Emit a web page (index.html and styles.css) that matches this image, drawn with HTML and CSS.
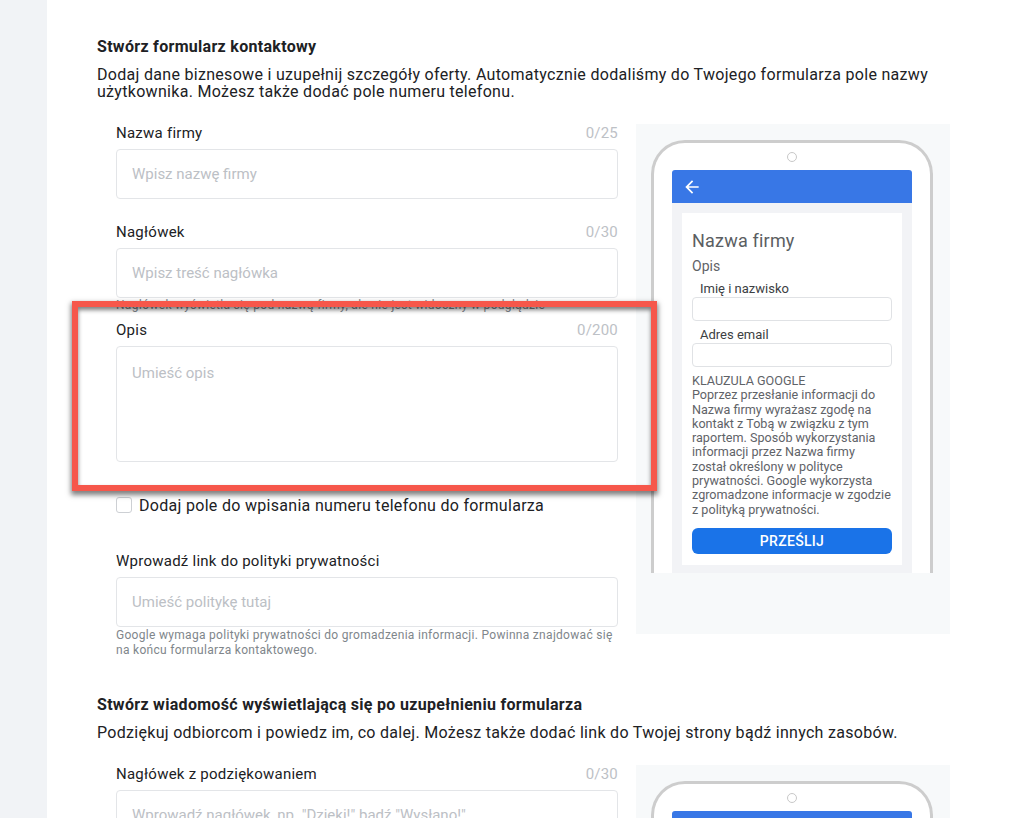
FILE: index.html
```html
<!DOCTYPE html>
<html lang="pl">
<head>
<meta charset="utf-8">
<title>Formularz kontaktowy</title>
<link rel="stylesheet" href="styles.css">
</head>
<body>
<div class="app">
  <aside class="sidebar"></aside>
  <main class="main">
    <section class="section">
      <h2 class="section-title">Stwórz formularz kontaktowy</h2>
      <p class="section-desc">Dodaj dane biznesowe i uzupełnij szczegóły oferty. Automatycznie dodaliśmy do Twojego formularza pole nazwy użytkownika. Możesz także dodać pole numeru telefonu.</p>
      <div class="row">
        <div class="fields">
          <div class="field">
            <div class="field-head"><span class="field-label">Nazwa firmy</span><span class="counter">0/25</span></div>
            <input class="input" type="text" placeholder="Wpisz nazwę firmy">
          </div>
          <div class="field field-helped">
            <div class="field-head"><span class="field-label">Nagłówek</span><span class="counter">0/30</span></div>
            <input class="input" type="text" placeholder="Wpisz treść nagłówka">
            <p class="helper">Nagłówek wyświetla się pod nazwą firmy, ale nie jest widoczny w podglądzie</p>
          </div>
          <div class="field field-area">
            <div class="field-head"><span class="field-label">Opis</span><span class="counter">0/200</span></div>
            <textarea class="textarea" placeholder="Umieść opis"></textarea>
          </div>
          <label class="check-row"><span class="checkbox"></span><span class="check-text">Dodaj pole do wpisania numeru telefonu do formularza</span></label>
          <div class="field field-last">
            <div class="field-head"><span class="field-label">Wprowadź link do polityki prywatności</span></div>
            <input class="input" type="text" placeholder="Umieść politykę tutaj">
            <p class="helper helper-block">Google wymaga polityki prywatności do gromadzenia informacji. Powinna znajdować się na końcu formularza kontaktowego.</p>
          </div>
          <div class="highlight"></div>
        </div>
        <div class="preview">
          <div class="phone">
            <div class="camera"></div>
            <div class="screen">
              <div class="screen-bar">
                <svg class="back" width="20" height="20" viewBox="0 0 24 24"><path d="M20 11H7.83l5.59-5.59L12 4l-8 8 8 8 1.41-1.41L7.83 13H20v-2z" fill="#fff"/></svg>
              </div>
              <div class="screen-body">
                <div class="card">
                  <div class="p-title">Nazwa firmy</div>
                  <div class="p-desc">Opis</div>
                  <div class="p-label">Imię i nazwisko</div>
                  <div class="p-input"></div>
                  <div class="p-label">Adres email</div>
                  <div class="p-input"></div>
                  <div class="p-clause">KLAUZULA GOOGLE<br>Poprzez przesłanie informacji do Nazwa firmy wyrażasz zgodę na kontakt z Tobą w związku z tym raportem. Sposób wykorzystania informacji przez Nazwa firmy został określony w polityce prywatności. Google wykorzysta zgromadzone informacje w zgodzie z polityką prywatności.</div>
                  <div class="p-button">PRZEŚLIJ</div>
                </div>
              </div>
            </div>
          </div>
        </div>
      </div>
    </section>

    <section class="section section-second">
      <h2 class="section-title">Stwórz wiadomość wyświetlającą się po uzupełnieniu formularza</h2>
      <p class="section-desc">Podziękuj odbiorcom i powiedz im, co dalej. Możesz także dodać link do Twojej strony bądź innych zasobów.</p>
      <div class="row">
        <div class="fields">
          <div class="field">
            <div class="field-head"><span class="field-label">Nagłówek z podziękowaniem</span><span class="counter">0/30</span></div>
            <input class="input" type="text" placeholder="Wprowadź nagłówek, np. &quot;Dzięki!&quot; bądź &quot;Wysłano!&quot;">
          </div>
          <div class="field">
            <div class="field-head"><span class="field-label">Opis</span><span class="counter">0/200</span></div>
            <textarea class="textarea" placeholder="Dodaj opis"></textarea>
          </div>
        </div>
        <div class="preview">
          <div class="phone">
            <div class="camera"></div>
            <div class="screen">
              <div class="screen-bar"></div>
              <div class="screen-body">
                <div class="card"></div>
              </div>
            </div>
          </div>
        </div>
      </div>
    </section>
  </main>
</div>
</body>
</html>
```

FILE: styles.css
```css
* { box-sizing: border-box; }

html, body {
  margin: 0;
  padding: 0;
  height: 818px;
  overflow: hidden;
  background: #ffffff;
  font-family: Roboto, "Liberation Sans", Arial, sans-serif;
  color: #202124;
}

.app {
  display: flex;
  height: 818px;
  overflow: hidden;
}

.sidebar {
  width: 47px;
  flex: 0 0 47px;
  background: #f1f3f6;
}

.main {
  flex: 1;
  padding: 37px 0 0 50px;
}

.section {
  width: 853px;
}

.section-second {
  margin-top: 37px;
}

.section-title {
  margin: 0;
  font-size: 16px;
  line-height: 20px;
  font-weight: 700;
  letter-spacing: 0.3px;
  color: #202124;
}

.section-desc {
  margin: 9px 0 0;
  font-size: 16px;
  line-height: 17px;
  letter-spacing: 0.3px;
  color: #202124;
}

.row {
  display: flex;
  gap: 18px;
  margin: 23px 0 0 19px;
  align-items: flex-start;
}

.fields {
  position: relative;
  width: 502px;
  flex: 0 0 502px;
}

.field {
  margin-bottom: 23px;
}

.field-helped {
  margin-bottom: 7px;
}

.field-area {
  margin-bottom: 33px;
}

.field-last {
  margin-bottom: 0;
}

.field-head {
  display: flex;
  justify-content: space-between;
  align-items: center;
  height: 20px;
  margin-bottom: 6px;
}

.field-label {
  font-size: 15px;
  letter-spacing: 0.25px;
  color: #202124;
}

.counter {
  font-size: 15px;
  letter-spacing: 0.2px;
  color: #bdc1c6;
}

.input,
.textarea {
  display: block;
  width: 100%;
  border: 1px solid #e3e5e8;
  border-radius: 4px;
  background: #fff;
  font-family: Roboto, "Liberation Sans", Arial, sans-serif;
  font-size: 15px;
  color: #202124;
  outline: none;
}

.input {
  height: 50px;
  padding: 0 15px;
}

.textarea {
  height: 116px;
  padding: 17px 15px;
  resize: none;
  line-height: 18px;
}

.input::placeholder,
.textarea::placeholder {
  color: #bcc0c5;
}

.helper {
  margin: 0;
  font-size: 12px;
  line-height: 15px;
  letter-spacing: 0.3px;
  color: #80868b;
}

.helper-block {
  margin-top: 1px;
}

.check-row {
  display: flex;
  align-items: center;
  height: 20px;
  margin-bottom: 36px;
}

.checkbox {
  width: 16px;
  height: 16px;
  border: 1px solid #cdd0d4;
  border-radius: 3px;
  margin-right: 7px;
  background: #fff;
}

.check-text {
  font-size: 16px;
  letter-spacing: 0.3px;
  color: #202124;
}

.highlight {
  position: absolute;
  left: -44px;
  top: 178px;
  width: 585px;
  height: 190px;
  border: 6px solid #f6574b;
  box-shadow: 0 3px 5px 1px rgba(0, 0, 0, 0.5), inset 0 3px 4px rgba(0, 0, 0, 0.5);
  pointer-events: none;
  z-index: 2;
}

/* Preview */
.preview {
  width: 314px;
  flex: 0 0 314px;
  height: 510px;
  margin-top: 1px;
  background: #f7f9fa;
  padding: 16px 17px 0 15px;
}

.phone {
  width: 282px;
  height: 433px;
  border: 3px solid #cdcdcd;
  border-bottom: none;
  border-radius: 34px 34px 0 0;
  background: #fff;
  display: flex;
  flex-direction: column;
  align-items: center;
}

.camera {
  width: 10px;
  height: 10px;
  border: 1px solid #c8c8c8;
  border-radius: 50%;
  margin-top: 9px;
  margin-bottom: 8px;
  flex: 0 0 auto;
}

.screen {
  width: 240px;
  flex: 1;
  display: flex;
  flex-direction: column;
}

.screen-bar {
  height: 33px;
  background: #3877e6;
  border-radius: 3px 3px 0 0;
  display: flex;
  align-items: center;
  padding-left: 10px;
  flex: 0 0 auto;
}

.back {
  display: block;
}

.screen-body {
  flex: 1;
  background: #f2f3f6;
  padding: 10px 10px 8px;
  display: flex;
}

.card {
  flex: 1;
  background: #fff;
  padding: 17px 10px 11px;
  color: #5f6368;
}

.p-title {
  font-size: 18px;
  line-height: 22px;
  letter-spacing: 0.2px;
  color: #5b5e62;
}

.p-desc {
  margin-top: 5px;
  font-size: 14px;
  line-height: 18px;
}

.p-label {
  margin-top: 6px;
  padding-left: 8px;
  font-size: 13px;
  line-height: 16px;
  color: #3c4043;
}

.p-input {
  height: 24px;
  border: 1px solid #e0e2e5;
  border-radius: 4px;
}

.p-clause {
  margin-top: 7px;
  font-size: 12.6px;
  line-height: 14.3px;
  color: #5f6368;
}

.p-button {
  margin-top: 11px;
  height: 26px;
  border-radius: 6px;
  background: #1a73e8;
  color: #fff;
  font-size: 14px;
  font-weight: 500;
  letter-spacing: 0.3px;
  display: flex;
  align-items: center;
  justify-content: center;
}
```
